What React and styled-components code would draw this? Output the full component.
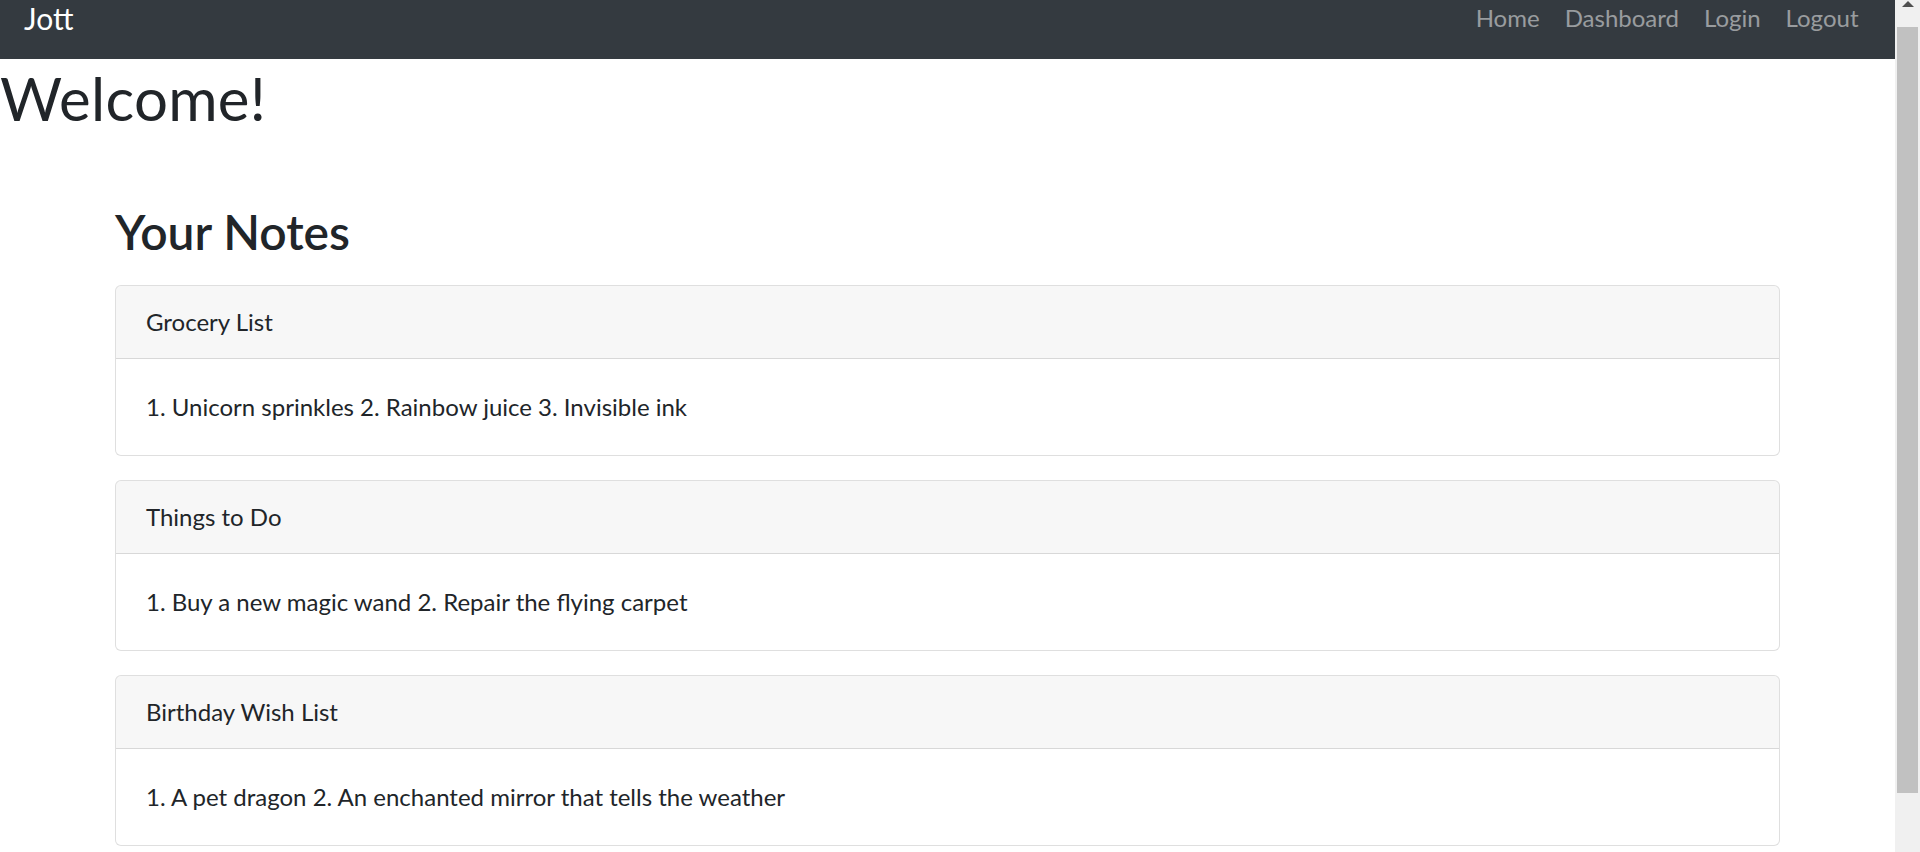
import styled, { createGlobalStyle } from "styled-components";

const GlobalStyle = createGlobalStyle`
  html, body {
    overflow: hidden;
  }

  body {
    margin: 0;
    font-family: Lato, "Noto Sans", sans-serif;
    font-size: 24px;
    line-height: 1.5;
    color: #212529;
    background-color: #ffffff;
  }
`;

const Frame = styled.div`
  display: flex;
  height: 852px;
`;

const Page = styled.div`
  flex: 1;
  min-width: 0;
`;

const ScrollBar = styled.div`
  width: 25px;
  flex-shrink: 0;
  background-color: #f0f0f0;
  display: flex;
  flex-direction: column;
  align-items: center;
`;

const ScrollArrow = styled.div`
  width: 0;
  height: 0;
  margin-top: 1px;
  border-left: 6px solid transparent;
  border-right: 6px solid transparent;
  border-bottom: 6px solid #505050;
`;

const ScrollThumb = styled.div`
  width: 21px;
  height: 766px;
  margin-top: 20px;
  background-color: #c1c1c1;
`;

const Navbar = styled.nav`
  height: 59px;
  padding: 0 24px;
  background-color: #343a40;

  display: flex;
  justify-content: space-between;
  align-items: flex-start;
`;

const Brand = styled.a`
  font-size: 30px;
  line-height: 36px;
  color: #ffffff;
  text-decoration: none;
`;

const NavLinks = styled.div`
  display: flex;
  flex-direction: row;
`;

const NavLink = styled.a`
  padding: 0 12.5px;
  font-size: 24px;
  line-height: 36px;
  color: rgba(255, 255, 255, 0.5);
  text-decoration: none;
`;

const Title = styled.h1`
  margin: 0 0 12px;
  padding-top: 3px;
  font-size: 60px;
  font-weight: 400;
  line-height: 1.2;
  letter-spacing: 0.3px;
`;

const Container = styled.div`
  max-width: 1665px;
  margin: 0 auto;
  padding: 57px 22.5px 0;
`;

const SectionTitle = styled.h2`
  margin: 0 0 24px;
  font-size: 48px;
  font-weight: 600;
  line-height: 1.2;
`;

const Card = styled.div`
  margin-bottom: 24px;
  border: 1px solid rgba(0, 0, 0, 0.125);
  border-radius: 6px;
  background-color: #ffffff;
  overflow: hidden;
`;

const CardHeader = styled.div`
  padding: 18px 30px;
  background-color: rgba(0, 0, 0, 0.03);
  border-bottom: 1px solid rgba(0, 0, 0, 0.125);
`;

const CardBody = styled.div`
  padding: 30px;
`;

const notes = [
  {
    title: "Grocery List",
    body: "1. Unicorn sprinkles 2. Rainbow juice 3. Invisible ink",
  },
  {
    title: "Things to Do",
    body: "1. Buy a new magic wand 2. Repair the flying carpet",
  },
  {
    title: "Birthday Wish List",
    body: "1. A pet dragon 2. An enchanted mirror that tells the weather",
  },
];

function App() {
  return (
    <Frame>
      <GlobalStyle />
      <Page>
        <Navbar>
          <Brand href="#">Jott</Brand>
          <NavLinks>
            <NavLink href="#">Home</NavLink>
            <NavLink href="#">Dashboard</NavLink>
            <NavLink href="#">Login</NavLink>
            <NavLink href="#">Logout</NavLink>
          </NavLinks>
        </Navbar>
        <Title>Welcome!</Title>
        <Container>
          <SectionTitle>Your Notes</SectionTitle>
          {notes.map((note) => (
            <Card key={note.title}>
              <CardHeader>{note.title}</CardHeader>
              <CardBody>{note.body}</CardBody>
            </Card>
          ))}
        </Container>
      </Page>
      <ScrollBar>
        <ScrollArrow />
        <ScrollThumb />
      </ScrollBar>
    </Frame>
  );
}

export default App;
